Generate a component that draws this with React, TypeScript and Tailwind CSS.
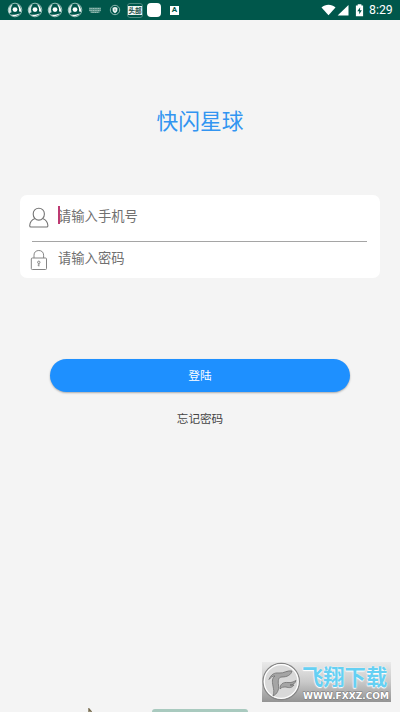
import type { ReactNode } from "react";

const cjk = "font-['Noto_Sans_CJK_SC',sans-serif]";

function SwirlIcon() {
  return (
    <svg viewBox="0 0 16 16" className="size-4" fill="none">
      <circle cx="8" cy="8" r="6.800" stroke="#a3c6bf" strokeWidth=".9" />
      <path d="M2.300 11.200A6.300 6.300 0 0 1 6 2.200C3.900 4.500 3.600 7.500 4.600 10.300z" fill="#d5e7e3" />
      <path d="M9.500 1.900a6.400 6.400 0 0 1 4.100 8.300l-1.500-1C12.500 6.300 11.400 3.800 9.500 1.900z" fill="#fff" />
      <path d="M3.500 12.700c3 .4 6.300-.1 9.400-1.500a6.300 6.300 0 0 1-9.400 1.500z" fill="#fff" />
      <circle cx="8" cy="7.600" r="2.400" fill="#fff" />
    </svg>
  );
}

function KeyboardIcon() {
  return (
    <svg viewBox="0 0 12 7" className="h-[7px] w-3">
      <path d="M0 .6h12v3.700h-1.400v1.600H1.400V4.300H0z" fill="#4d8b80" />
      <path d="M.5 1.500h11M.5 3.500h11M2.500 5.500h7" stroke="#a9cbc4" strokeWidth=".8" strokeDasharray="1.200 .5" />
    </svg>
  );
}

function ShieldIcon() {
  return (
    <svg viewBox="0 0 12 12" className="size-3" fill="none">
      <circle cx="6" cy="6" r="4.700" stroke="#8bb5ad" />
      <path d="M6 3l2.400.8v2.300C8.400 7.600 7.400 8.500 6 9.200 4.600 8.500 3.600 7.600 3.600 6.100V3.800z" fill="#f0f8f6" />
      <path d="M6 4.700v2.400" stroke="#4d8b80" strokeWidth=".8" />
    </svg>
  );
}

function StatusBar() {
  return (
    <div className="relative h-5 bg-[#00574b]">
      <div className="flex h-5 items-center pl-[7px]">
        <div className="flex gap-1">
          <SwirlIcon />
          <SwirlIcon />
          <SwirlIcon />
          <SwirlIcon />
        </div>
        <div className="ml-[6px] flex w-3">
          <KeyboardIcon />
        </div>
        <div className="ml-2">
          <ShieldIcon />
        </div>
        <div className="ml-[6px] flex h-[15px] w-4 items-center justify-center rounded-[3px] border border-[#4b887e]">
          <span
            className={`${cjk} flex h-[9px] w-[14px] items-center justify-center bg-[#edf5f3] text-[6.5px] leading-none font-bold text-[#16493f]`}
          >
            头部
          </span>
        </div>
        <div className="ml-[4px] h-[14px] w-[14px] rounded-[4px] bg-white" />
        <div className="ml-[9px] flex size-[9px] items-center justify-center bg-white font-['Roboto',sans-serif] text-[8px] leading-none font-bold text-[#00574b]">
          A
        </div>
      </div>
      <div className="absolute top-0 right-[7px] flex h-5 items-center">
        <svg viewBox="0 0 44 14" className="h-[14px] w-11" fill="#fff">
          <path d="M1.500 4.500C5.500.9 11.500.9 15.500 4.500L8.500 12.300z" />
          <path d="M28.500 2v10.500H17.600z" />
          <path d="M37.700 1.200h3.700v1.300h1.700v10.700h-7.200V2.500h1.800z" />
          <path d="M40.200 4.300 37.300 8.300h1.900v3l2.700-4.100H40z" fill="#00574b" />
        </svg>
        <span className="ml-[5px] w-[24px] font-['Roboto',sans-serif] text-[12.300px] leading-none text-white">
          8:29
        </span>
      </div>
    </div>
  );
}

function UserIcon() {
  return (
    <svg viewBox="0 0 20 22" className="mt-px h-[22px] w-5" fill="none" stroke="#757575" strokeWidth="1.1">
      <path d="M9.800 1.300c3.300 0 5.600 2.400 5.600 5.600 0 3.700-2.500 6.200-5.600 6.200S4.200 10.600 4.200 6.900c0-3.200 2.300-5.600 5.600-5.600z" />
      <path d="M6 11.500C3 12.600.9 14.700.7 18.700c0 .9.400 1.300 1.300 1.300h15.600c.9 0 1.300-.4 1.300-1.300-.2-4-2.300-6.100-5.300-7.200" />
    </svg>
  );
}

function LockIcon() {
  return (
    <svg viewBox="0 0 20 22" className="mt-px h-[22px] w-5" fill="none" stroke="#858585">
      <rect x="2.300" y="9" width="15.200" height="11.500" rx="1" />
      <path d="M5 9V6.200C5 3.200 7 1.500 9.800 1.500s4.800 1.700 4.800 4.700V9" />
      <circle cx="9.800" cy="13.300" r="1.200" />
      <path d="M9.900 14.500v2.900M8.700 16.200h1.200" />
    </svg>
  );
}

function Field({ icon, label, focused }: { icon: ReactNode; label: string; focused?: boolean }) {
  return (
    <div className="flex items-start">
      {icon}
      <div className="relative ml-[9px]">
        {focused && <span className="absolute top-0 left-0 h-[18px] w-[1.500px] bg-[#bd3a72]" />}
        <span className="block text-[13.300px] leading-[20px] text-[#707070]">{label}</span>
      </div>
    </div>
  );
}

function Watermark() {
  return (
    <div className="absolute top-[662px] left-[262px] flex h-10 w-[129px] bg-linear-to-b from-[#eaeaea] via-[#c9c9c9] to-[#949494]">
      <svg viewBox="0 0 40 40" className="size-10 shrink-0">
        <circle cx="19.200" cy="19.500" r="18.200" fill="#d9d9d9" stroke="#858585" strokeWidth="1.200" />
        <circle cx="19.200" cy="19.500" r="16.900" fill="none" stroke="#fff" strokeWidth="1.200" />
        <g fill="#a5a5a5" stroke="#707070" strokeWidth=".8">
          <path d="M7 17.500C9 12.500 12 10.500 17 11c5 .6 8-3 13-2-1 4-5 6-10 6-4 0-4 4-3.500 8 .8 5-1.500 9-5.500 11 1.500-4 .5-7 0-10-1-5-1-8 2-10-3 0-4 1.500-6 3.500z" />
          <path d="M18 27c0-5 3-7 8-6.500 3 .4 5-.4 8-2-1 3-3 4.500-6 4.500h4c-2 3-5 3-8 2-3 0-4 0-6 2z" />
        </g>
      </svg>
      <div className="relative flex-1">
        <div className="absolute top-px left-0 text-[21.300px] leading-[25px] font-bold whitespace-nowrap text-[#65d0f3] [text-shadow:0_1px_1px_#fff,0_0_2px_#fff]">
          飞翔下载
        </div>
        <svg viewBox="0 0 89 10" className="absolute top-[29px] left-0 h-[10px] w-[89px]">
          <text
            x="1"
            y="8"
            textLength="86"
            lengthAdjust="spacingAndGlyphs"
            fontFamily="DejaVu Sans, sans-serif"
            fontSize="8"
            fontWeight="700"
            fill="#fff"
            stroke="#777"
            strokeWidth=".8"
            paintOrder="stroke"
          >
            WWW.FXXZ.COM
          </text>
        </svg>
      </div>
    </div>
  );
}

export default function App() {
  return (
    <div className={`${cjk} relative h-[712px] w-[400px] overflow-hidden bg-[#f4f4f4]`}>
      <StatusBar />

      <h1 className="mt-[84px] text-center text-[21.700px] leading-[32px] text-[#3295f1]">
        快闪星球
      </h1>

      <div className="mx-5 mt-[59px] h-[83px] rounded-[7px] bg-white px-[9px] pt-[11px]">
        <div className="h-[35px]">
          <Field icon={<UserIcon />} label="请输入手机号" focused />
        </div>
        <div className="mr-[4px] ml-[3px] h-px bg-[#a5a5a5]" />
        <div className="mt-[6px]">
          <Field icon={<LockIcon />} label="请输入密码" />
        </div>
      </div>

      <button className="mx-auto mt-[81px] flex h-[33px] w-[300px] items-center justify-center rounded-full bg-[#1e90ff] pb-px text-[11.700px] leading-none text-white shadow-[0_1px_2px_rgba(0,0,0,0.3)]">
        登陆
      </button>

      <div className="mt-[17px] text-center text-[11.600px] leading-[18px] text-[#444]">
        忘记密码
      </div>

      <Watermark />

      <div className="absolute top-[709px] left-[152px] h-1 w-[96px] rounded-t-[3px] bg-[#a9cabf]" />
      <svg viewBox="0 0 6 4" className="absolute top-[708px] left-[87px] h-1 w-[6px]" fill="none">
        <path d="M2 4V1l2.500 3" stroke="#756a4d" strokeWidth="1.400" />
      </svg>
    </div>
  );
}
